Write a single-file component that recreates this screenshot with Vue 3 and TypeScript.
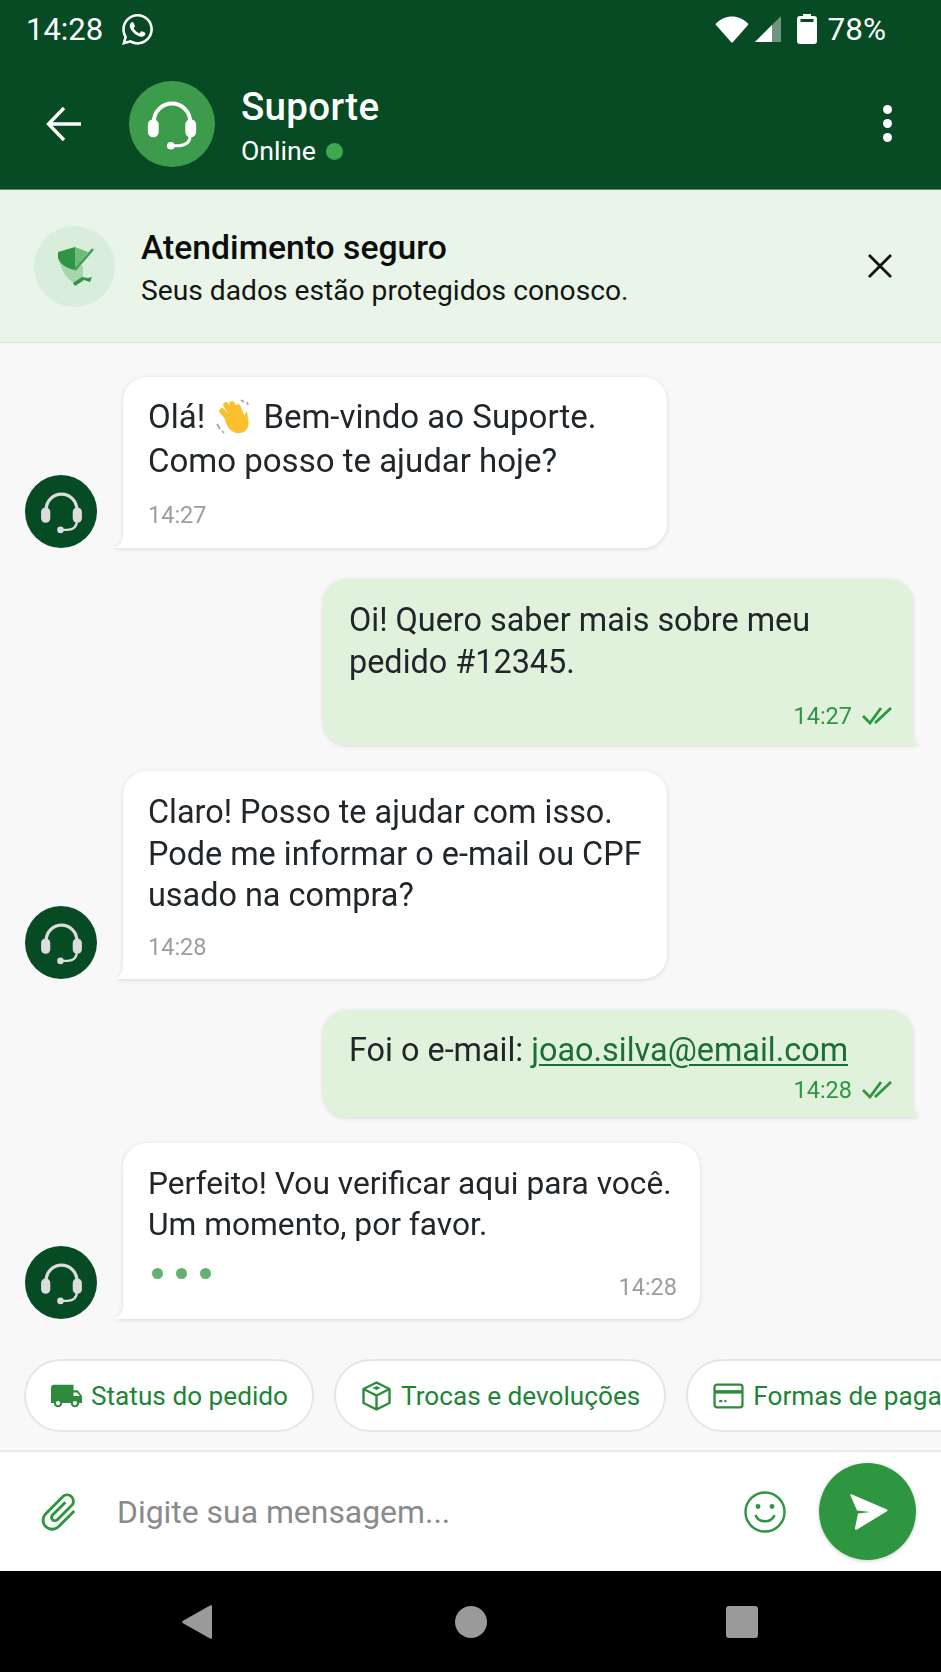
<script setup lang="ts">
interface Message {
  side: 'in' | 'out'
  lines: string[]
  time: string
  wave?: boolean
  link?: string
  typing?: boolean
}

const messages: Message[] = [
  { side: 'in', lines: ['Olá!', 'Como posso te ajudar hoje?'], time: '14:27', wave: true },
  { side: 'out', lines: ['Oi! Quero saber mais sobre meu', 'pedido #12345.'], time: '14:27' },
  { side: 'in', lines: ['Claro! Posso te ajudar com isso.', 'Pode me informar o e-mail ou CPF', 'usado na compra?'], time: '14:28' },
  { side: 'out', lines: ['Foi o e-mail:'], time: '14:28', link: 'joao.silva@email.com' },
  { side: 'in', lines: ['Perfeito! Vou verificar aqui para você.', 'Um momento, por favor.'], time: '14:28', typing: true },
]

const chips = [
  { icon: 'truck', label: 'Status do pedido' },
  { icon: 'box', label: 'Trocas e devoluções' },
  { icon: 'card', label: 'Formas de pagamento' },
]
</script>

<template>
  <div class="phone">
    <svg class="defs" width="0" height="0">
      <symbol id="headset" viewBox="0 0 48 48">
        <path d="M9 27v-5a15 15 0 0 1 30 0v5" fill="none" stroke="currentColor" stroke-width="3.200" />
        <rect x="4" y="20" width="9" height="15" rx="4.400" fill="currentColor" />
        <rect x="35" y="20" width="9" height="15" rx="4.400" fill="currentColor" />
        <path d="M39 34c0 5-4 7.500-9 8h-5" fill="none" stroke="currentColor" stroke-width="2.400" />
        <circle cx="23" cy="42" r="3.200" fill="currentColor" />
      </symbol>
    </svg>

    <header class="top">
      <div class="status">
        <span class="clock">14:28</span>
        <svg class="wa" viewBox="0 0 24 24" fill="#fff">
          <path d="M17.472 14.382c-.297-.149-1.758-.867-2.03-.967-.273-.099-.471-.148-.67.15-.197.297-.767.966-.94 1.164-.173.199-.347.223-.644.075-.297-.15-1.255-.463-2.39-1.475-.883-.788-1.48-1.761-1.653-2.059-.173-.297-.018-.458.13-.606.134-.133.298-.347.446-.52.149-.174.198-.298.298-.497.099-.198.05-.371-.025-.52-.075-.149-.669-1.612-.916-2.207-.242-.579-.487-.5-.669-.51-.173-.008-.371-.01-.57-.01-.198 0-.52.074-.792.372-.272.297-1.04 1.016-1.04 2.479 0 1.462 1.065 2.875 1.213 3.074.149.198 2.096 3.2 5.077 4.487.709.306 1.262.489 1.694.625.712.227 1.36.195 1.871.118.571-.085 1.758-.719 2.006-1.413.248-.694.248-1.289.173-1.413-.074-.124-.272-.198-.57-.347m-5.421 7.403h-.004a9.87 9.87 0 0 1-5.031-1.378l-.361-.214-3.741.982.998-3.648-.235-.374a9.86 9.86 0 0 1-1.51-5.26c.001-5.45 4.436-9.884 9.888-9.884 2.64 0 5.122 1.03 6.988 2.898a9.825 9.825 0 0 1 2.893 6.994c-.003 5.45-4.437 9.884-9.885 9.884m8.413-18.297A11.815 11.815 0 0 0 12.05 0C5.495 0 .16 5.335.157 11.892c0 2.096.547 4.142 1.588 5.945L.057 24l6.305-1.654a11.882 11.882 0 0 0 5.683 1.448h.005c6.554 0 11.89-5.335 11.893-11.893a11.821 11.821 0 0 0-3.48-8.413z" />
        </svg>
        <div class="status-right">
          <svg class="wifi" viewBox="0 0 34 28" fill="#fff">
            <path d="M1 8.500C10-1 24-1 33 8.500a1 1 0 0 1 0 1.400L18 27a1.400 1.400 0 0 1-2 0L1 9.900a1 1 0 0 1 0-1.400z" />
          </svg>
          <svg class="signal" viewBox="0 0 28 28">
            <path d="M27 1v26H1z" fill="#fff" fill-opacity=".42" />
            <path d="M18 10v17H1z" fill="#fff" />
          </svg>
          <svg class="battery" viewBox="0 0 20 30" fill="#fff">
            <path fill-rule="evenodd" d="M6 0h8v2h3a3 3 0 0 1 3 3v22a3 3 0 0 1-3 3H3a3 3 0 0 1-3-3V5a3 3 0 0 1 3-3h3zM3.500 5v3h13V5z" />
          </svg>
          <span class="pct">78%</span>
        </div>
      </div>
      <div class="toolbar">
        <svg class="back" viewBox="0 0 36 36" fill="none" stroke="#fff" stroke-width="3.400">
          <path d="M35 18H3M18 2 2.500 18 18 34" />
        </svg>
        <div class="avatar-big">
          <svg class="hs-big"><use href="#headset" /></svg>
        </div>
        <div class="who">
          <div class="who-name">Suporte</div>
          <div class="who-state">Online <i class="dot"></i></div>
        </div>
        <div class="menu"><i></i><i></i><i></i></div>
      </div>
    </header>

    <section class="banner">
      <div class="shield-wrap">
        <svg class="shield" viewBox="0 0 38 40">
          <path d="M3 13c2 12 8 20 16 25l8-5V20z" fill="#a5d5ad" />
          <path d="M19 1l13 5-13 17z" fill="#6fbb7e" />
          <path d="M2 6 19 1v23C10 22 4 18 2 12z" fill="#2f9444" />
          <path d="M19 24 37 3" fill="none" stroke="#3f9f54" stroke-width="2.600" />
          <path d="M17 37l9-6 6 1 4-1-2 5-6-2-9 6z" fill="#2f9444" />
        </svg>
      </div>
      <div class="banner-text">
        <div class="banner-title">Atendimento seguro</div>
        <div class="banner-sub">Seus dados estão protegidos conosco.</div>
      </div>
      <svg class="close" viewBox="0 0 24 24" fill="none" stroke="#111" stroke-width="2.800">
        <path d="M1 1l22 22M23 1 1 23" />
      </svg>
    </section>

    <main class="chat">
      <div class="list">
        <div v-for="(m, i) in messages" :key="i" class="row" :class="m.side">
          <div v-if="m.side === 'in'" class="avatar-small">
            <svg class="hs-small"><use href="#headset" /></svg>
          </div>
          <div class="bubble" :class="{ typing: m.typing, short: m.link, first: m.wave }">
            <p v-for="(line, n) in m.lines" :key="n" class="line">
              {{ line }}
              <svg v-if="m.wave && n === 0" class="wave" viewBox="0 0 38 38">
                <g fill="none" stroke="#fbc02d" stroke-width="5.500" stroke-linecap="round">
                  <path d="M17 24 8 13M20 21 12 7M24 19 18 6M28 19 24 9" />
                </g>
                <path d="M11 22c2 9 9 14 15 13 7-1 10-7 8-14l-1-8-5 8-13-4z" fill="#fbc02d" />
                <path d="M3 26l3 5M8 33l2 2M27 2l3 2M33 4l1 3" stroke="#9aa5ad" stroke-width="1.600" fill="none" />
              </svg>
              <template v-if="m.wave && n === 0">Bem-vindo ao Suporte.</template>
              <a v-if="m.link" class="mail">{{ m.link }}</a>
            </p>
            <div v-if="m.typing" class="foot">
              <div class="dots"><i></i><i></i><i></i></div>
              <span class="time">{{ m.time }}</span>
            </div>
            <div v-else class="foot">
              <span class="time">{{ m.time }}</span>
              <svg v-if="m.side === 'out'" class="checks" viewBox="0 0 30 18" fill="none" stroke="#2e9640" stroke-width="2.800">
                <path d="M1 9l7 7L19 1M13 16 29 1" />
              </svg>
            </div>
          </div>
        </div>
      </div>

      <div class="chips">
        <div v-for="c in chips" :key="c.label" class="chip">
          <svg v-if="c.icon === 'truck'" class="chip-ico" viewBox="1 3 22 18" fill="#2e8b3d">
            <path d="M20 8h-3V4H3c-1.100 0-2 .9-2 2v11h2c0 1.660 1.340 3 3 3s3-1.340 3-3h6c0 1.660 1.340 3 3 3s3-1.340 3-3h2v-5l-3-4zM6 18.500c-.83 0-1.500-.67-1.500-1.500s.67-1.500 1.500-1.500 1.500.67 1.500 1.500-.67 1.500-1.500 1.500zm13.500-9 1.960 2.500H17V9.500h2.500zm-1.500 9c-.83 0-1.500-.67-1.500-1.500s.67-1.500 1.500-1.500 1.500.67 1.500 1.500-.67 1.500-1.500 1.500z" />
          </svg>
          <svg v-else-if="c.icon === 'box'" class="chip-ico" viewBox="0 0 30 30" fill="none" stroke="#2e8b3d" stroke-width="2.400" stroke-linejoin="round">
            <path d="M15 1.500 28 8v14l-13 6.500L2 22V8zM2 8l13 6.500L28 8M15 14.500v14" />
            <path d="M15 5l4 2-4 2-4-2z" fill="#2e8b3d" stroke="none" />
          </svg>
          <svg v-else class="chip-ico" viewBox="0 0 30 26" fill="none" stroke="#2e8b3d" stroke-width="2.200">
            <rect x="1.500" y="2" width="27" height="22" rx="2.500" />
            <path d="M1.500 9h27" stroke-width="3.400" />
            <path d="M6 18h3M11 18h2" />
          </svg>
          <span>{{ c.label }}</span>
        </div>
      </div>
    </main>

    <footer class="composer">
      <svg class="clip" viewBox="0 0 24 24" fill="#2e9640">
        <path d="M16.500 6v11.500c0 2.210-1.790 4-4 4s-4-1.790-4-4V5c0-1.380 1.120-2.500 2.500-2.500s2.500 1.120 2.500 2.500v10.500c0 .55-.45 1-1 1s-1-.45-1-1V6H10v9.500c0 1.380 1.120 2.500 2.500 2.500s2.500-1.120 2.500-2.500V5c0-2.210-1.790-4-4-4S7 2.790 7 5v12.500c0 3.040 2.460 5.500 5.500 5.500s5.500-2.460 5.500-5.500V6h-1.500z" />
      </svg>
      <input class="field" type="text" placeholder="Digite sua mensagem..." />
      <svg class="smile" viewBox="0 0 42 42" fill="none" stroke="#2e9640" stroke-width="2.400">
        <circle cx="21" cy="21" r="19.500" />
        <path d="M12 25c3 7 15 7 18 0" stroke-linecap="round" stroke-width="2.600" />
        <circle cx="14" cy="15.500" r="2.400" fill="#2e9640" stroke="none" />
        <circle cx="28" cy="15.500" r="2.400" fill="#2e9640" stroke="none" />
      </svg>
      <button class="send" type="button">
        <svg viewBox="0 0 38 38" fill="#fff">
          <path d="M1.500 1.200 37 16.500c.8.400.8 1.300 0 1.700L7 36.500c-1.200.6-2.200-.2-2-1.400l3-14.600 12-1.500-13-1.500L.5 2.500C.1 1.400.6.900 1.500 1.200z" />
        </svg>
      </button>
    </footer>

    <nav class="nav">
      <svg class="nav-ico" viewBox="0 0 34 34" fill="#9a9a9a">
        <path d="M31 1.500v31c0 1.200-1 1.600-2 1L2 18.300c-1-.6-1-2 0-2.600L29 .5c1-.6 2-.2 2 1z" />
      </svg>
      <i class="nav-round"></i>
      <i class="nav-square"></i>
    </nav>
  </div>
</template>

<style scoped>
.defs {
  position: absolute;
}
.phone {
  display: flex;
  flex-direction: column;
  width: 941px;
  height: 1672px;
  overflow: hidden;
  font-family: Roboto, "Noto Sans", sans-serif;
  background: #f8f8f8;
}

/* cabecalho */
.top {
  background: #064b24;
  color: #fff;
  height: 189px;
  flex: none;
}
.status {
  display: flex;
  align-items: center;
  height: 58px;
  padding: 0 55px 0 26px;
}
.clock {
  font-size: 31px;
}
.wa {
  width: 31px;
  height: 31px;
  margin-left: 19px;
}
.status-right {
  display: flex;
  align-items: center;
  margin-left: auto;
}
.wifi {
  width: 34px;
  height: 28px;
}
.signal {
  width: 28px;
  height: 28px;
  margin-left: 5px;
}
.battery {
  width: 20px;
  height: 30px;
  margin-left: 15px;
}
.pct {
  font-size: 31.500px;
  margin-left: 11px;
}
.toolbar {
  display: flex;
  align-items: center;
  height: 131px;
  padding: 0 49px 0 46px;
}
.back {
  width: 36px;
  height: 36px;
}
.avatar-big {
  display: flex;
  align-items: center;
  justify-content: center;
  width: 86px;
  height: 86px;
  margin-left: 47px;
  border-radius: 50%;
  background: #3d9c4c;
}
.hs-big {
  width: 58px;
  height: 58px;
  color: #fff;
}
.who {
  margin-left: 26px;
  margin-top: 5px;
}
.who-name {
  font-size: 38.500px;
  font-weight: 500;
  letter-spacing: 0.3px;
  line-height: 44px;
}
.who-state {
  display: flex;
  align-items: center;
  font-size: 26.700px;
  line-height: 32px;
  margin-top: 6px;
}
.dot {
  width: 17px;
  height: 17px;
  margin-left: 10px;
  border-radius: 50%;
  background: #3fa84f;
}
.menu {
  display: flex;
  flex-direction: column;
  gap: 5px;
  margin-left: auto;
}
.menu i {
  width: 9px;
  height: 9px;
  border-radius: 50%;
  background: #fff;
}

/* aviso */
.banner {
  display: flex;
  align-items: center;
  flex: none;
  height: 154px;
  padding: 0 49px 0 34px;
  background: #e9f5e9;
  border-top: 1px solid #5d8a6c;
  border-bottom: 1px solid #dfe3df;
  box-sizing: border-box;
}
.shield-wrap {
  display: flex;
  align-items: center;
  justify-content: center;
  width: 81px;
  height: 81px;
  border-radius: 50%;
  background: #d9eeda;
}
.shield {
  width: 38px;
  height: 40px;
}
.banner-text {
  margin-left: 26px;
  margin-top: 4px;
}
.banner-title {
  font-size: 33.700px;
  font-weight: 500;
  line-height: 40px;
  color: #0d0d0d;
}
.banner-sub {
  font-size: 28.200px;
  line-height: 36px;
  margin-top: 5px;
  color: #151515;
}
.close {
  width: 24px;
  height: 24px;
  margin-left: auto;
}

/* conversa */
.chat {
  display: flex;
  flex-direction: column;
  flex: 1;
  min-height: 0;
  padding: 34px 0 18px;
}
.list {
  display: flex;
  flex-direction: column;
  padding: 0 28px 0 25px;
}
.row {
  display: flex;
  align-items: flex-end;
}
.row.in {
  gap: 26px;
}
.row.out {
  justify-content: flex-end;
}
.in + .out {
  margin-top: 31px;
}
.out + .in {
  margin-top: 26px;
}
.avatar-small {
  display: flex;
  align-items: center;
  justify-content: center;
  flex: none;
  width: 72px;
  height: 73px;
  border-radius: 50%;
  background: #064b24;
}
.hs-small {
  width: 49px;
  height: 49px;
  color: #dcdcdc;
}
.bubble {
  position: relative;
  box-sizing: border-box;
  width: 544px;
  padding: 21px 24px 17px 25px;
  border-radius: 24px;
  background: #fff;
  color: #20262a;
  font-size: 32.400px;
  filter: drop-shadow(0 1px 2px rgba(0, 0, 0, 0.13));
}
.bubble.first {
  padding-top: 18px;
  padding-bottom: 18px;
  font-size: 33px;
}
.bubble.first .line {
  line-height: 44px;
}
.bubble.typing {
  width: 577px;
  padding-top: 20px;
  padding-right: 23px;
  padding-bottom: 0;
  font-size: 31.700px;
}
.in .bubble {
  border-bottom-left-radius: 0;
}
.in .bubble::before {
  content: "";
  position: absolute;
  left: -9px;
  bottom: 0;
  width: 9px;
  height: 14px;
  background: #fff;
  clip-path: path("M9 0C9 7 6 12 0 14L9 14Z");
}
.out .bubble {
  width: 590px;
  padding: 21px 21px 14px 26px;
  background: #e1f2dc;
  border-bottom-right-radius: 0;
}
.out .bubble.short {
  padding-top: 20px;
  padding-bottom: 12px;
}
.out .bubble::after {
  content: "";
  position: absolute;
  right: -7px;
  bottom: 0;
  width: 7px;
  height: 14px;
  background: #e1f2dc;
  clip-path: path("M0 0C0 7 2 12 7 14L0 14Z");
}
.line {
  margin: 0;
  line-height: 41.600px;
  white-space: pre-wrap;
}
.wave {
  display: inline-block;
  width: 38px;
  height: 38px;
  vertical-align: -8px;
  margin: 0 11px 0 1px;
}
.mail {
  color: #1b6e35;
  text-decoration: underline;
  text-decoration-thickness: 2px;
  text-underline-offset: 3px;
}
.foot {
  display: flex;
  align-items: center;
  margin-top: 15px;
  height: 30px;
}
.first .foot {
  margin-top: 17px;
}
.out .foot {
  justify-content: flex-end;
  margin-top: 18px;
}
.out .short .foot {
  margin-top: 3px;
}
.time {
  font-size: 23.500px;
  color: #9d9d9d;
}
.out .time {
  color: #2e9640;
}
.checks {
  width: 30px;
  height: 18px;
  margin-left: 10px;
}
.typing .foot {
  justify-content: space-between;
  align-items: flex-start;
  margin-top: 14px;
  height: 59px;
}
.typing .time {
  margin-top: 13px;
}
.dots {
  display: flex;
  gap: 13px;
  margin: 8px 0 0 4px;
}
.dots i {
  width: 11px;
  height: 11px;
  border-radius: 50%;
  background: #63b070;
}

/* atalhos */
.chips {
  display: flex;
  gap: 20px;
  margin-top: auto;
  padding-left: 24px;
}
.chip {
  display: flex;
  align-items: center;
  flex: none;
  gap: 9px;
  box-sizing: border-box;
  height: 73px;
  padding: 0 24px 0 25px;
  border: 2px solid #e6e6e6;
  border-radius: 37px;
  background: #fff;
  color: #1f8336;
  font-size: 26.200px;
  white-space: nowrap;
}
.chip-ico {
  width: 31px;
  height: 30px;
}

/* campo de mensagem */
.composer {
  display: flex;
  align-items: center;
  flex: none;
  box-sizing: border-box;
  height: 121px;
  padding: 0 25px 0 36px;
  background: #fff;
  border-top: 2px solid #e9e9e9;
}
.clip {
  width: 46px;
  height: 46px;
  transform: rotate(45deg);
}
.field {
  flex: 1;
  min-width: 0;
  margin-left: 35px;
  border: 0;
  outline: 0;
  padding: 0;
  background: transparent;
  font-family: inherit;
  font-size: 31.900px;
}
.field::placeholder {
  color: #8a8a8a;
  opacity: 1;
}
.smile {
  width: 42px;
  height: 42px;
  margin-right: 33px;
}
.send {
  display: flex;
  align-items: center;
  justify-content: center;
  width: 97px;
  height: 97px;
  padding: 0;
  border: 0;
  border-radius: 50%;
  background: #2e9640;
  box-shadow: 0 1px 4px rgba(0, 0, 0, 0.2);
}
.send svg {
  width: 38px;
  height: 38px;
  margin-left: 2px;
}

/* navegacao */
.nav {
  display: flex;
  align-items: center;
  justify-content: space-between;
  flex: none;
  height: 101px;
  padding: 0 183px 0 181px;
  background: #000;
}
.nav-ico {
  width: 34px;
  height: 34px;
}
.nav-round {
  width: 32px;
  height: 32px;
  border-radius: 50%;
  background: #9a9a9a;
}
.nav-square {
  width: 32px;
  height: 32px;
  border-radius: 3px;
  background: #9a9a9a;
}
</style>
